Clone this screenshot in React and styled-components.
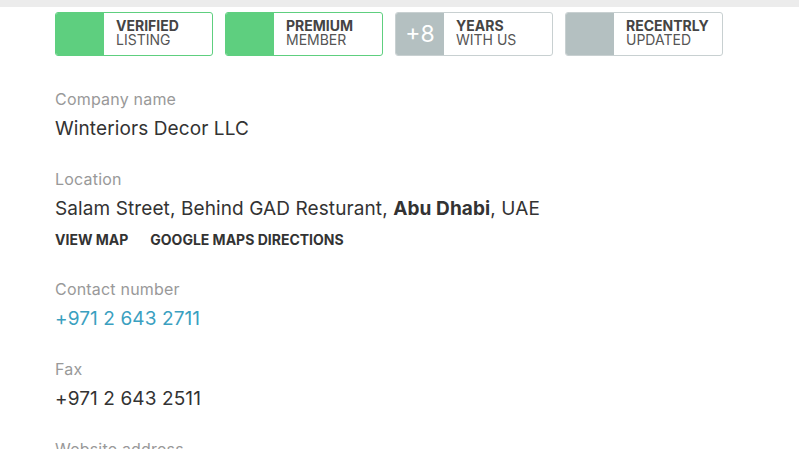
import React from "react";
import styled, { createGlobalStyle } from "styled-components";

const GlobalStyle = createGlobalStyle`
	body {
		margin: 0;
		background: #fff;
		font-family: "Inter", "Liberation Sans", sans-serif;
		color: #333;
	}
`;

const TopStrip = styled.div`
	height: 7px;
	background-color: #ececec;
`;

const Content = styled.div`
	padding: 5px 0 0 55px;
`;

const BadgeRow = styled.div`
	display: flex;
	gap: 12px;
`;

const Badge = styled.div`
	display: flex;
	width: 158px;
	height: 44px;
	box-sizing: border-box;
	border: 1px solid ${(props) => (props.green ? "#5ecf7f" : "#c8d0d1")};
	border-radius: 3px;
	overflow: hidden;
`;

const BadgeMark = styled.div`
	width: 48px;
	flex-shrink: 0;
	display: flex;
	align-items: center;
	justify-content: center;
	background-color: ${(props) => (props.green ? "#5ecf7f" : "#b4c0c1")};
	color: #fff;
	font-size: 23px;
	font-weight: 400;
	padding-bottom: 1px;
`;

const BadgeText = styled.div`
	display: flex;
	flex-direction: column;
	justify-content: center;
	padding: 0 0 2px 12px;
	font-size: 14px;
	line-height: 14.5px;
	text-transform: uppercase;
	color: #555;

	& > b {
		font-weight: 700;
		color: #444;
	}
`;

const Group = styled.div`
	margin-top: ${(props) => props.top || "20px"};
`;

const Label = styled.div`
	font-size: 16px;
	line-height: 24px;
	color: #999;
	letter-spacing: 0.2px;
`;

const Value = styled.div`
	font-size: 19px;
	line-height: 36px;
	letter-spacing: 0.1px;
	color: ${(props) => (props.link ? "#3aa0c0" : "#333")};

	& > b {
		font-weight: 700;
	}
`;

const Links = styled.div`
	display: flex;
	gap: 22px;
	margin-top: 3px;
	padding-bottom: 7px;
	font-size: 14px;
	line-height: 20px;
	font-weight: 700;
	text-transform: uppercase;
	color: #333;
`;

const badges = [
	{ green: true, mark: "", top: "Verified", bottom: "Listing" },
	{ green: true, mark: "", top: "Premium", bottom: "Member" },
	{ green: false, mark: "+8", top: "Years", bottom: "With us" },
	{ green: false, mark: "", top: "Recentrly", bottom: "Updated" },
];

export default function App() {
	return (
		<>
			<GlobalStyle />
			<TopStrip />
			<Content>
				<BadgeRow>
					{badges.map((b) => (
						<Badge key={b.top} green={b.green}>
							<BadgeMark green={b.green}>{b.mark}</BadgeMark>
							<BadgeText>
								<b>{b.top}</b>
								<span>{b.bottom}</span>
							</BadgeText>
						</Badge>
					))}
				</BadgeRow>

				<Group top="31px">
					<Label>Company name</Label>
					<Value>Winteriors Decor LLC</Value>
				</Group>

				<Group>
					<Label>Location</Label>
					<Value>
						Salam Street, Behind GAD Resturant, <b>Abu Dhabi</b>, UAE
					</Value>
					<Links>
						<span>View map</span>
						<span>Google maps directions</span>
					</Links>
				</Group>

				<Group>
					<Label>Contact number</Label>
					<Value link>+971 2 643 2711</Value>
				</Group>

				<Group>
					<Label>Fax</Label>
					<Value>+971 2 643 2511</Value>
				</Group>

				<Group>
					<Label>Website address</Label>
				</Group>
			</Content>
		</>
	);
}
